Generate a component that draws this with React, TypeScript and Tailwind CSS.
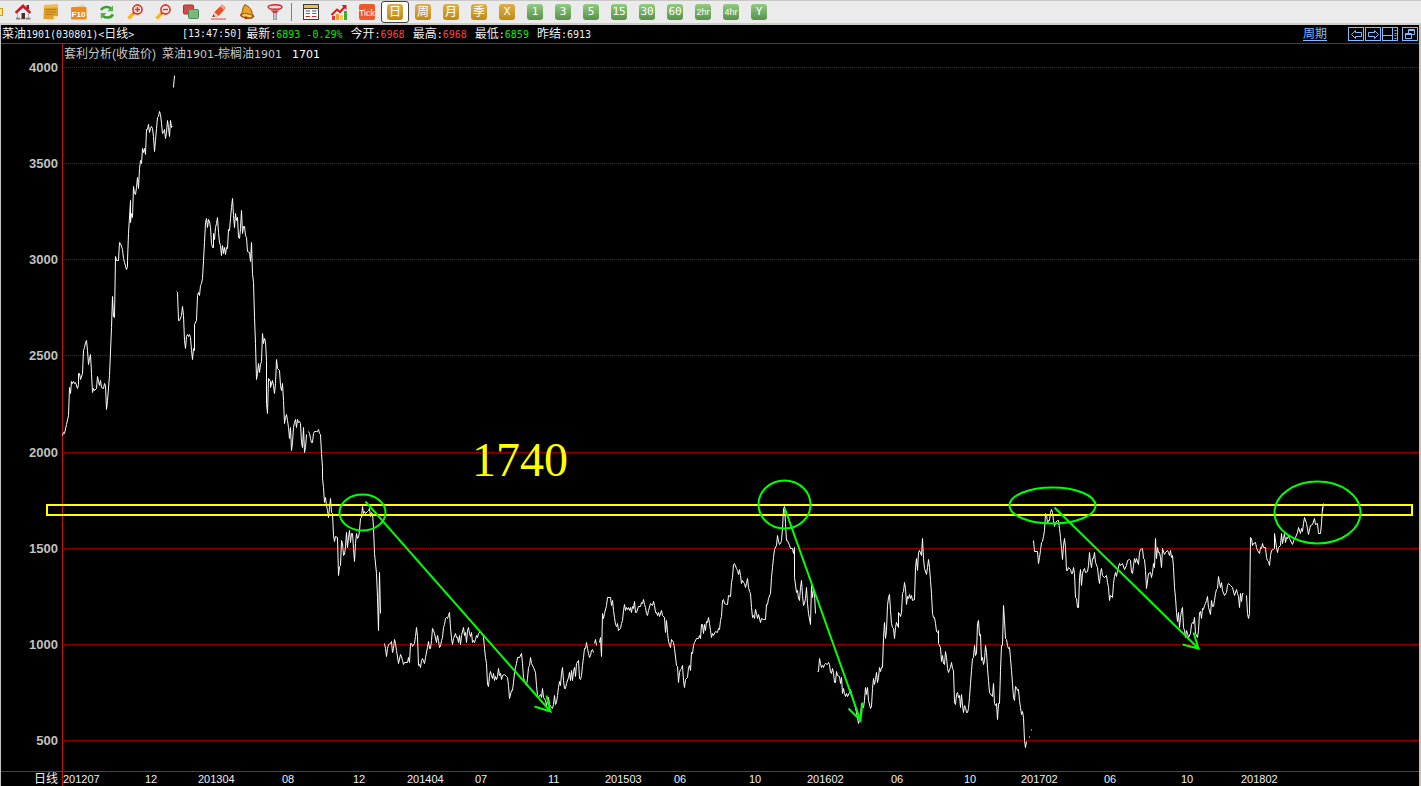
import type { ReactNode } from 'react';
import clsx from 'clsx';

const priceTicks = [4000, 3500, 3000, 2500, 2000, 1500, 1000, 500];

// start of every date label along the time axis
const dateTicks = [
  { label: '201207', x: 63 },
  { label: '12', x: 145 },
  { label: '201304', x: 198 },
  { label: '08', x: 282 },
  { label: '12', x: 353 },
  { label: '201404', x: 407 },
  { label: '07', x: 475 },
  { label: '11', x: 548 },
  { label: '201503', x: 605 },
  { label: '06', x: 674 },
  { label: '10', x: 749 },
  { label: '201602', x: 807 },
  { label: '06', x: 891 },
  { label: '10', x: 964 },
  { label: '201702', x: 1021 },
  { label: '06', x: 1104 },
  { label: '10', x: 1181 },
  { label: '201802', x: 1241 },
];

const PLOT_LEFT = 63;
const PLOT_RIGHT = 1419;

// each run is an unbroken stretch of the spread line
const spreadRuns = [
  '62,435 63,432 64,433 66,424 68,415 69,387 70,393 71,381 72,383 73,381 74,383 75,382 77,388 78,384 78,373 79,373 80,379 82,373 83,350 84,347 85,342 86,340 87,350 88,364 89,358 90,354 91,373 92,392 93,388 94,390 96,388 97,376 98,381 99,385 100,380 101,387 103,388 104,383 105,385 106,409 107,400 109,375 111,327 112,296 113,316 114,317 115,256 116,260 118,260 119,242 120,243 122,249 123,258 124,262 126,269 127,266 127,260 128,233 130,200 130,222 131,213 132,217 133,186 134,193 135,194 136,187 137,177 138,188 139,168 140,160 141,163 142,148 143,152 144,148 145,154 146,129 147,129 148,124 149,132 150,128 151,126 152,128 153,136 154,151 155,140 156,128 157,117 158,116 159,111 160,114 161,123 162,133 163,132 164,129 165,138 166,132 167,120 168,127 169,136 170,120 171,127 172,126',
  '173,87 174,75',
  '176,291 177,292 178,320 179,320 181,315 182,306 183,315 184,340 185,348 186,336 187,334 188,336 189,334 190,337 191,350 192,359 193,348 194,350 194,324 196,320 197,295 198,292 199,295 200,285 201,283 202,278 203,260 204,242 205,222 206,218 207,227 208,219 209,221 210,227 211,243 212,247 213,247 213,233 214,239 215,227 216,223 217,217 218,232 219,242 220,245 221,255 222,245 223,253 224,247 225,254 226,247 227,248 228,229 229,230 230,218 231,207 232,198 233,215 234,227 235,213 236,220 237,217 238,237 239,238 240,228 241,210 242,233 243,226 244,226 245,235 246,237 247,251 249,252 250,261 251,242 252,273 253,282 254,317 255,343 256,379 257,373 258,363 259,372 260,364 261,361 262,333 263,343 264,338 265,341 266,360 266,403 267,413 268,378 270,381 270,387 272,380 273,385 274,393 275,383 276,359 277,368 279,370 280,385 281,390 282,383 283,400 284,423 285,417 286,414 287,420 288,427 289,438 290,427 291,450 292,442 293,427 294,422 295,419 296,427 297,419 298,422 299,421 300,423 301,442 302,447 303,427 304,452 305,447 306,434',
  '308,431 309,433 310,438 311,442 312,442 313,433 314,431 316,431 317,431 318,429 319,433 320,434 321,453 322,467 322,478 323,487 324,502 325,497 326,505 327,510 328,517 329,507 330,498 331,512 332,513 333,535 334,541 335,536 337,537 338,575 339,566 340,565 341,540 342,543 343,555 344,554 345,546 346,532 347,547 348,537 349,530 350,542 351,533 352,533 353,548 354,561 355,543 356,533 357,538 358,537 359,530 360,518 361,517 362,506 363,513 364,511 365,513 367,511 368,510 369,508 370,516 371,512 372,513 373,527 374,553 376,573 377,597 378,630 379,572 380,613',
  '384,643 385,648 386,656 387,648 388,644 390,643 391,641 392,652 393,648 394,639 395,643 396,650 398,663 400,654 401,656 402,660 403,664 404,662 407,662 408,657 409,662 410,643 411,643 412,646 414,643 415,636 416,627 417,636 418,665 419,664 420,667 421,660 422,658 424,663 425,657 427,647 428,641 429,648 430,648 431,640 432,628 433,630 434,633 436,642 437,635 438,640 439,647 440,646 441,640 442,637 443,627 444,624 445,618 446,617 447,618 448,615 449,612 450,627 451,638 452,644 453,638 455,633 456,637 457,637 458,642 459,635 460,644 461,635 463,627 464,635 465,632 466,642 467,630 468,627 469,633 470,636 471,632 472,642 473,640 474,642 475,639 476,635 477,637 478,633 480,631 482,633 483,637 484,648 485,657 486,663 487,684 488,686 489,675 490,671 491,675 492,678 493,673 494,680 495,676 496,679 497,676 498,668 499,675 500,673 501,679 502,675 504,674 506,676 507,677 508,685 509,698 511,690 512,690 513,682 514,672 515,667 516,663 517,657 519,657 521,653 522,663 523,677 524,680 525,683 526,685 527,678 528,667 529,665 530,657 531,663 533,667 535,672 536,685 537,695 538,697 539,695 540,694 541,697 542,688 543,697 545,700 546,705 548,697 549,704 551,707 552,708 553,704 554,695 555,704 556,702 557,695 558,687 559,681 560,685 561,673 562,667 563,680 564,688 565,688 566,683 568,677 569,672 570,680 571,670 572,680 573,671 574,667 575,676 576,663 578,660 579,678 580,679 581,675 582,665 583,657 584,648 585,648 586,642 587,648 588,653 589,657 590,655 591,650 592,649 593,652',
  '594,643 595,639 596,645',
  '599,642 600,637 601,656 602,613 603,618 604,613 606,605 607,597 610,597 611,605 612,600 613,610 614,617 615,624 616,626 617,623 618,630 620,628 621,623 622,620 623,610 624,604 625,610 626,607 627,609 628,607 629,610 630,607 631,612 632,606 633,608 634,601 635,612 636,612 638,606 640,606 641,602 642,603 643,599 644,604 645,607 646,613 647,615 648,610 650,603 652,605 653,601 654,605 655,612 656,612 657,615 658,612 659,616 661,610 662,615 664,617 665,632 666,620 667,632 668,641 669,644 670,647 671,639 673,642 674,648 676,665 677,666 678,682 679,672 680,669 681,668 682,665 683,680 684,687 685,679 687,677 688,667 689,665 690,670 691,652 692,653 693,645 694,642 696,638 698,638 699,635 700,638 701,624 702,624 703,633 704,624 705,630 706,621 707,622 708,617 709,623 710,630 711,637 712,633 713,635 715,631 717,632 718,628 719,629 720,620 721,616 722,600 723,599 724,603 726,604 727,604 728,595 730,596 731,582 732,577 733,564 734,563 736,568 737,570 738,574 739,569 740,575 741,583 742,580 743,582 744,583 745,587 746,583 747,578 748,587 749,591 750,593 751,607 752,617 753,615 754,618 755,609 756,613 757,618 758,614 760,622 761,618 763,619 765,619 766,604 767,604 768,598 770,593 771,577 772,567 773,557 774,549 776,545 777,535 778,541 779,544 780,543 781,540 782,528 783,508 784,506 785,523 786,540 787,540 789,545 790,548 792,548 793,553 794,547 794,577 796,592 797,590 798,598 799,600 800,587 801,580 802,595 803,605 804,603 805,598 806,587 807,603 808,613 810,624 811,585 812,597 813,590 814,593 815,613',
  '817,671 818,671 819,658 820,663 821,667 822,665 823,667 824,664 825,663 827,664 828,662 829,664 830,672 831,673 832,668 833,672 834,682 835,682 836,671 837,675 839,676 840,683 841,677 842,693 843,688 844,693 845,696 846,693 847,696 849,692 850,689 852,697 854,703 856,712 858,723 860,717 861,703 863,707 864,700 865,687 866,694 867,687 868,700 870,708 871,706 872,688 873,678 874,684 875,679 876,672 877,682 878,677 879,667 880,671 881,667 882,667 883,637 884,622 885,638 886,630 887,605 888,597 889,594 890,610 891,623 892,627 893,628 894,638 895,627 896,622 898,627 898,612 899,613 900,616 901,612 902,593 903,591 904,582 905,588 906,604 907,596 908,598 909,594 910,598 911,595 912,600 914,599 915,567 916,558 917,570 918,552 919,550 921,555 922,538 923,558 924,568 926,574 927,567 928,559 929,567 930,580 931,593 932,613 933,617 934,617 935,623 936,631 937,632 938,630 938,643 940,647 941,661 942,655 943,663 944,664 945,651 946,657 947,668 948,672 949,669 950,667 951,662 952,668 953,670 954,702 955,704 956,694 957,692 958,697 959,695 960,707 961,694 962,705 963,712 964,705 965,707 966,712 967,712 968,708 969,697 970,683 971,670 972,658 973,657 974,645 975,655 976,653 977,623 978,620 979,635 980,634 981,660 982,657 983,664 984,660 985,645 986,652 987,668 988,680 989,692 991,695 992,696 993,683 994,703 995,705 996,703 997,719 998,703 999,703 1000,670 1001,645 1002,645 1003,605 1004,620 1005,638 1006,639 1007,645 1008,648 1009,647 1010,658 1011,670 1012,683 1013,697 1014,700 1015,686 1016,687 1017,690 1018,689 1019,700 1020,707 1021,714 1022,711 1023,717 1024,740 1025,747 1026,741',
  '1029,736 1029,737',
  '1031,729 1031,730',
  '1033,540 1034,551 1037,551 1038,563 1039,557 1040,550 1041,542 1042,541 1043,536 1044,530 1045,513 1046,514 1047,523 1048,520 1049,520 1050,512 1051,509 1052,512 1053,520 1054,526 1055,522 1057,520 1058,520 1059,528 1060,537 1061,548 1062,559 1063,545 1064,538 1065,547 1066,570 1067,570 1068,567 1070,569 1071,573 1072,573 1073,567 1074,573 1075,597 1076,598 1077,607 1078,607 1079,577 1080,569 1081,585 1082,573 1083,570 1084,568 1085,572 1087,571 1088,565 1089,552 1090,562 1091,567 1092,558 1093,558 1094,552 1095,562 1097,567 1098,577 1099,583 1100,572 1101,568 1102,575 1104,577 1106,575 1107,582 1108,587 1109,600 1110,595 1112,597 1113,583 1114,576 1115,572 1116,576 1117,570 1119,563 1120,565 1122,563 1124,569 1126,565 1127,560 1129,559 1130,560 1131,572 1132,573 1133,565 1134,558 1135,562 1136,558 1138,564 1139,552 1140,549 1142,548 1143,558 1144,559 1145,570 1146,588 1148,573 1150,572 1151,577 1152,572 1153,563 1154,567 1155,538 1156,558 1157,547 1158,552 1159,552 1160,557 1161,567 1162,548 1164,554 1165,552 1167,550 1168,552 1169,555 1170,550 1171,557 1172,555 1173,567 1174,587 1175,597 1176,612 1177,621 1178,612 1179,627 1180,617 1181,610 1182,607 1183,627 1184,630 1185,637 1186,630 1187,633 1188,637 1190,633 1191,624 1192,622 1193,623 1194,617 1195,633 1197,637 1198,630 1199,612 1200,611 1201,618 1202,608 1203,609 1204,605 1205,603 1206,600 1207,596 1208,607 1210,614 1211,600 1212,606 1213,606 1214,600 1215,593 1216,589 1217,588 1218,576 1219,582 1220,587 1221,582 1222,590 1224,595 1226,592 1227,585 1228,583 1230,585 1232,587 1234,595 1236,589 1237,593 1238,596 1239,607 1240,593 1241,601 1242,593 1243,593',
  '1246,595 1247,613 1248,618 1249,613 1250,537 1251,538 1252,545 1253,543 1255,542 1256,547 1257,550 1259,553 1260,547 1261,548 1262,543 1263,547 1265,547 1266,557 1267,560 1268,561 1269,565 1270,555 1271,550 1274,548 1274,533 1276,547 1277,552 1278,547 1280,545 1281,533 1282,543 1283,538 1284,533 1285,542 1286,537 1287,538 1288,535 1289,538 1292,544 1294,538 1295,537 1297,532 1298,527 1300,533 1301,528 1302,531 1303,523 1304,517 1306,523 1308,534 1310,525 1312,524 1314,518 1315,524 1317,523 1318,533 1320,533 1321,523 1322,507 1322,510 1323,503',
];

const circles = [
  { cx: 362, cy: 512, rx: 23, ry: 18 },
  { cx: 784, cy: 504, rx: 26, ry: 24 },
  { cx: 1052, cy: 505, rx: 43, ry: 18 },
  { cx: 1317, cy: 512, rx: 43, ry: 31 },
];

const arrows = [
  'M365 501L550 711M534 706L550 711L546 695',
  'M784 507L860 720M848 708L860 720L862 702',
  'M1054 507L1198 648M1182 644L1198 648L1193 632',
];

function Icon({ children }: { children: ReactNode }) {
  return (
    <svg viewBox="0 0 16 16" className="h-4 w-4" fill="none" aria-hidden="true">
      {children}
    </svg>
  );
}

const magnifier = (
  <>
    <path d="M6.5 9.5L1.5 14.5" stroke="#f5b820" strokeWidth="3.4" />
    <path d="M8 8L6 10" stroke="#d8452a" strokeWidth="2.4" />
    <circle cx="10.5" cy="5.5" r="4.5" fill="#fff4f0" stroke="#e8402c" strokeWidth="1.8" />
  </>
);

const tools = [
  {
    label: '首页',
    icon: (
      <>
        <path d="M2.5 8L8 3L13.5 8V15H2.5Z" fill="#eceef2" stroke="#8a8a8a" strokeWidth=".6" />
        <path d="M11.5 1H14V5H11.5Z" fill="#901c20" />
        <path d="M8 0L-.3 8L1.4 9.8L8 4L14.600 9.8L16.300 8Z" fill="#c81c28" />
        <path d="M6.500 9H10V15H6.500Z" fill="#4a2c28" />
        <path d="M1 13.500H5V15.500H1ZM11 13.500H15.500V15.500H11Z" fill="#8a8a84" />
      </>
    ),
  },
  {
    label: '笔记',
    icon: (
      <>
        <path d="M1 1L15 .5V12L10.5 15.5L.5 15Z" fill="#dda028" />
        <path d="M1 1L15 .5V3.5L1 4Z" fill="#f0bc4c" />
        <path d="M3 5.5H13M3 8H13M3 10.5H10" stroke="#b87c18" />
        <path d="M15 12L10.5 15.5V12Z" fill="#fbe0a0" />
      </>
    ),
  },
  {
    label: 'F10',
    icon: (
      <>
        <path d="M2 3.5L13 .5L16 14L1 15.5Z" fill="#e8d0a0" />
        <rect x="0" y="3" width="15.5" height="12.5" rx="1" fill="#f08a1c" />
        <text x="7.5" y="12.5" textAnchor="middle" fill="#fff" fontFamily="Liberation Sans" fontWeight="700" fontSize="8">
          F10
        </text>
      </>
    ),
  },
  {
    label: '刷新',
    icon: (
      <>
        <path d="M2 6C4 2.5 9 2 12 4.5" stroke="#3c9c30" strokeWidth="2.6" />
        <path d="M14 1.5V7.2H8.5Z" fill="#55b040" />
        <path d="M14 10.5C12 14 7 14.5 4 12" stroke="#3c9c30" strokeWidth="2.6" />
        <path d="M1.8 15V9H7.4Z" fill="#55b040" />
      </>
    ),
  },
  {
    label: '放大',
    icon: (
      <>
        {magnifier}
        <path d="M8 5.5H13M10.5 3V8" stroke="#e8301c" strokeWidth="1.6" />
      </>
    ),
  },
  {
    label: '缩小',
    icon: (
      <>
        {magnifier}
        <path d="M8 5.5H13" stroke="#e8301c" strokeWidth="1.6" />
      </>
    ),
  },
  {
    label: '叠加',
    icon: (
      <>
        <rect x=".5" y="1" width="10" height="9" rx="1" fill="#d84848" stroke="#a83030" />
        <rect x="5.5" y="5.5" width="10" height="9" rx="1" fill="#7ab87a" stroke="#4c8a54" />
      </>
    ),
  },
  {
    label: '画线',
    icon: (
      <>
        <path d="M1.5 13L3.5 8L11 .5L15 4L7.500 12Z" fill="#e8502c" />
        <path d="M11 .5L15 4L13 6L9 2.500Z" fill="#f8a088" />
        <path d="M1.5 13L3.5 8L7.500 12Z" fill="#f4d0a0" />
        <path d="M1.5 13L2.400 10.600L4 12.400Z" fill="#333" />
        <path d="M0 15H15" stroke="#e84838" />
      </>
    ),
  },
  {
    label: '预警',
    icon: (
      <>
        <path d="M6 .5L9 2.500C13.500 5 12 9 15 12.500L1.500 11C4.500 8 2.500 4.500 6 .5Z" fill="#e8a428" stroke="#8a4c10" />
        <ellipse cx="8" cy="12" rx="7" ry="2.800" fill="#a85a14" transform="rotate(8 8 12)" />
        <ellipse cx="8" cy="11.700" rx="5" ry="1.400" fill="#f4c860" transform="rotate(8 8 11.700)" />
        <circle cx="7" cy="13.700" r="1.500" fill="#c03018" />
      </>
    ),
  },
  {
    label: '筛选',
    icon: (
      <>
        <path d="M1.500 3.500L6.500 9V16H9.500V9L14.500 3.500Z" fill="#c4c4c4" stroke="#787878" strokeWidth=".7" />
        <ellipse cx="8" cy="3" rx="7" ry="2.300" fill="#f4d8d8" stroke="#d02828" strokeWidth="1.400" />
        <path d="M4.500 6.500H11.500L9.500 9H6.500Z" fill="#d83030" />
      </>
    ),
  },
];

const views = [
  {
    label: '报价',
    icon: (
      <>
        <rect x=".5" y=".5" width="15" height="15" fill="#fff" stroke="#3c3c3c" />
        <path d="M1 2.5H15" stroke="#f4c030" strokeWidth="3" />
        <path d="M1 4.5H15" stroke="#3c3c3c" />
        <path d="M2.5 7H7M9 7H13.5" stroke="#305090" />
        <path d="M2.5 9.5H7M9 9.5H13.5" stroke="#28a028" />
        <path d="M2.5 12.5H7M9 12.5H13.5" stroke="#d82020" />
      </>
    ),
  },
  {
    label: '走势',
    icon: (
      <>
        <path d="M1 12H4V16H1Z" fill="#e03838" />
        <path d="M5 10H8V16H5Z" fill="#f4a028" />
        <path d="M9 11H12V16H9Z" fill="#f4d040" />
        <path d="M13 7H16V16H13Z" fill="#48a838" />
        <path d="M.5 11L6 5.500L9 8L14 2.500" stroke="#e01818" strokeWidth="2" />
        <path d="M10.500 1H15.500V6Z" fill="#e01818" />
      </>
    ),
  },
  {
    label: 'Tick',
    icon: (
      <>
        <rect width="16" height="16" rx="2" fill="#ec5a2c" />
        <text x="8" y="12" textAnchor="middle" fill="#fff" fontFamily="Liberation Sans" fontSize="9">
          Tick
        </text>
      </>
    ),
  },
];

const periods = [
  { label: '日', tone: 'gold', active: true },
  { label: '周', tone: 'gold' },
  { label: '月', tone: 'gold' },
  { label: '季', tone: 'gold' },
  { label: 'X', tone: 'gold' },
  { label: '1', tone: 'green' },
  { label: '3', tone: 'green' },
  { label: '5', tone: 'green' },
  { label: '15', tone: 'green' },
  { label: '30', tone: 'green' },
  { label: '60', tone: 'green' },
  { label: '2hr', tone: 'green' },
  { label: '4hr', tone: 'green' },
  { label: 'Y', tone: 'green' },
];

const quotes = [
  { label: '今开', value: '6968', color: 'text-[#ff4040]' },
  { label: '最高', value: '6968', color: 'text-[#ff4040]' },
  { label: '最低', value: '6859', color: 'text-[#00f000]' },
  { label: '昨结', value: '6913', color: 'text-[#f0f0f0]' },
];

const windowButtons = [
  { label: '上一个', path: 'M3 7L7 3V5H13V9H7V11Z' },
  { label: '下一个', path: 'M13 7L9 3V5H3V9H9V11Z' },
  { label: '分栏', path: 'M0 8H10M10 0V14M12 3H14M12 6H14M12 8H14M12 11H14' },
];

function Mono({ children }: { children: ReactNode }) {
  return <span className="font-['DejaVu_Sans_Mono',monospace] text-[10px]">{children}</span>;
}

function ToolButton({ label, children }: { label: string; children: ReactNode }) {
  return (
    <button type="button" aria-label={label} className="flex h-[22px] w-7 shrink-0 items-center justify-center">
      {children}
    </button>
  );
}

function Toolbar() {
  return (
    <div className="flex h-[25px] items-center overflow-hidden border-t border-b-2 border-t-[#c8c8c8] border-b-[#d0ccc8] bg-[#ebebeb]">
      <span className="mr-1.5 h-2 w-[3px] shrink-0 border border-l-0 border-[#d09a20] bg-[#ffe48a]" />
      {tools.map((tool) => (
        <ToolButton key={tool.label} label={tool.label}>
          <Icon>{tool.icon}</Icon>
        </ToolButton>
      ))}
      <span className="mr-[5px] ml-0.5 h-[18px] w-px shrink-0 bg-[#808080]" />
      {views.map((view) => (
        <ToolButton key={view.label} label={view.label}>
          <Icon>{view.icon}</Icon>
        </ToolButton>
      ))}
      {periods.map((period) => (
        <button
          key={period.label}
          type="button"
          aria-pressed={Boolean(period.active)}
          className={clsx(
            'flex h-[22px] w-7 shrink-0 items-center justify-center rounded-[3px] border',
            period.active ? 'border-[#404040] bg-white' : 'border-transparent',
          )}
        >
          <span
            className={clsx(
              'flex h-4 w-4 items-center justify-center rounded-[3px] bg-linear-to-b leading-4 text-white',
              period.tone === 'gold' ? 'from-[#dcb04c] to-[#c08a00]' : 'from-[#92cc80] to-[#58924a]',
              period.tone === 'gold' && period.label !== 'X' && 'text-xs',
              (period.tone === 'green' || period.label === 'X') && period.label.length < 3 && "font-['DejaVu_Sans_Mono'] text-[11px]",
              period.label.length === 3 && "font-['Liberation_Sans'] text-[9px]",
            )}
          >
            {period.label}
          </span>
        </button>
      ))}
    </div>
  );
}

function QuoteBar() {
  return (
    <header className="flex h-[19px] items-center overflow-hidden border-b border-[#c01410] pl-px text-xs leading-[18px] whitespace-nowrap text-[#f0f0f0]">
      <h1 className="w-[180px] shrink-0">
        菜油<Mono>1901(030801)&lt;</Mono>日线<Mono>&gt;</Mono>
      </h1>
      <div className="flex gap-2">
        <time className="-mr-1 flex">
          <Mono>[13:47:50]</Mono>
        </time>
        <span>
          最新<Mono>:</Mono>
          <span className="text-[#00f000]">
            <Mono>6893 -0.29%</Mono>
          </span>
        </span>
        {quotes.map((quote) => (
          <span key={quote.label}>
            {quote.label}
            <Mono>:</Mono>
            <span className={quote.color}>
              <Mono>{quote.value}</Mono>
            </span>
          </span>
        ))}
      </div>
      <a href="#period" className="mr-[21px] ml-auto text-[#80bcff] underline underline-offset-2">
        周期
      </a>
      <div className="mr-px flex gap-px text-[#80bcff]">
        {windowButtons.map((button) => (
          <button key={button.label} type="button" aria-label={button.label} className="h-3.5 w-4 border border-[#80bcff]">
            <svg viewBox="1 1 14 12" className="h-3 w-3.5" fill="none" stroke="currentColor" aria-hidden="true">
              <path d={button.path} transform="translate(.5 .5)" />
            </svg>
          </button>
        ))}
        <button type="button" aria-label="还原" className="ml-[3px] h-3.5 w-4 border border-[#80bcff]">
          <svg viewBox="1 1 14 12" className="h-3 w-3.5" fill="none" stroke="currentColor" aria-hidden="true">
            <path d="M6.5 6V2.5H12.5V7.5H9.5M3.5 6.5H9.5V11.5H3.5ZM6.5 3.5H12.5M3.5 7.5H9.5" />
          </svg>
        </button>
      </div>
    </header>
  );
}

function SpreadChart() {
  return (
    <svg
      viewBox="63 44 1356 727"
      preserveAspectRatio="none"
      className="absolute inset-0 h-full w-full overflow-visible"
      fill="none"
      role="img"
      aria-label="菜油1901-棕榈油1901 价差"
    >
      <g stroke="#a80000" strokeDasharray="1 1" shapeRendering="crispEdges">
        {[67, 163, 259, 355, 452, 548, 644, 740].map((y) => (
          <path key={y} d={`M64 ${y + 0.5}H1419`} />
        ))}
      </g>
      <g stroke="#fff" transform="translate(.5 .5)">
        {spreadRuns.map((points) => (
          <polyline key={points} points={points} />
        ))}
      </g>
      <rect x="47" y="505" width="1365" height="10" stroke="#ff0" strokeWidth="2" />
      <g stroke="#0f0" strokeWidth="2" transform="translate(.5 .5)">
        {circles.map((circle) => (
          <ellipse key={circle.cx} {...circle} />
        ))}
        {arrows.map((d) => (
          <path key={d} d={d} />
        ))}
      </g>
      <text x="472" y="476" fill="#ff0" fontFamily="Liberation Serif" fontSize="48">
        1740
      </text>
    </svg>
  );
}

function App() {
  return (
    <div className="flex min-h-screen flex-col bg-black font-['Liberation_Sans','Noto_Sans_CJK_SC',sans-serif]">
      <Toolbar />
      <div className="flex flex-1 flex-col border-r-2 border-l border-r-[#c8c0bc] border-l-[#c8c0bc]">
        <QuoteBar />
        <main className="flex min-h-[400px] flex-1">
          <div className="flex w-[62px] shrink-0 flex-col justify-between border-r border-[#c01410] pt-4 pr-1 pb-[22px] text-right text-[13px] leading-4 font-bold text-[#c0c0c0]">
            {priceTicks.map((tick) => (
              <span key={tick}>{tick}</span>
            ))}
          </div>
          <div className="relative flex-1">
            <h2 className="flex items-baseline pt-0.5 pl-px text-xs leading-4 whitespace-nowrap text-[#c8c8c8]">
              <span>套利分析(收盘价)</span>
              <span className="ml-1.5">菜油</span>
              <span className="font-['DejaVu_Sans'] text-[11px]">1901-</span>
              <span>棕榈油</span>
              <span className="font-['DejaVu_Sans'] text-[11px]">1901</span>
              <span className="ml-2.5 font-['DejaVu_Sans'] text-[11px] text-white">1701</span>
            </h2>
            <SpreadChart />
          </div>
        </main>
        <footer className="flex h-[15px] border-t border-[#c01410] text-xs leading-[14px] text-[#f0f0f0]">
          <div className="w-[62px] shrink-0 border-r border-[#c01410] pr-1 text-right">日线</div>
          <div className="flex flex-1">
            {dateTicks.map((tick, i) => {
              const next = i + 1 < dateTicks.length ? dateTicks[i + 1].x : PLOT_RIGHT;
              return (
                <span
                  key={tick.x}
                  className="text-[11px]"
                  style={{ width: `${((next - tick.x) / (PLOT_RIGHT - PLOT_LEFT)) * 100}%` }}
                >
                  {tick.label}
                </span>
              );
            })}
          </div>
        </footer>
      </div>
    </div>
  );
}

export default App;
